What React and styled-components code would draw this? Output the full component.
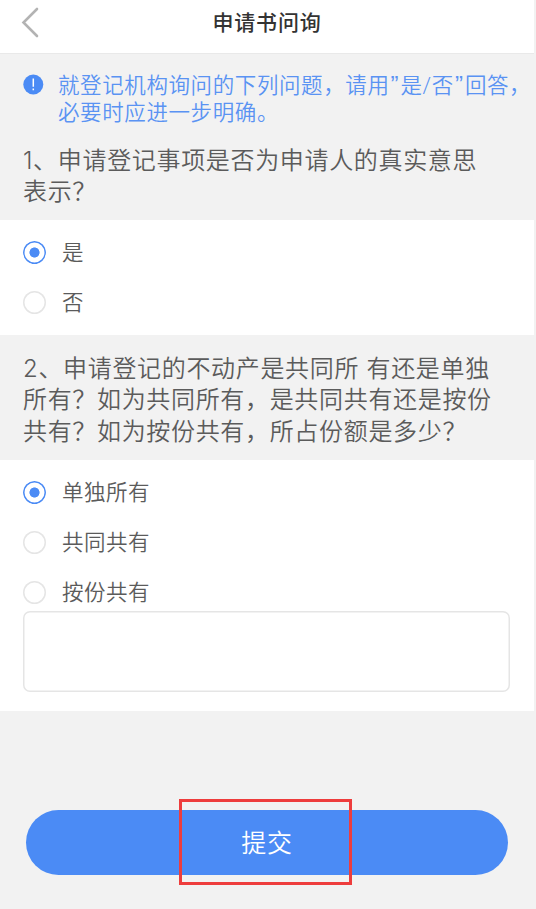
import { useState } from "react";
import styled, { createGlobalStyle } from "styled-components";

const colors = {
  blue: "#4b8bf5",
  notice: "#5a93f3",
  text: "#5b5b5b",
  title: "#333333",
  page: "#f2f2f2",
  border: "#e5e5e5",
  red: "#ee3d3d",
  white: "#ffffff",
};

const GlobalStyle = createGlobalStyle`
  * {
    box-sizing: border-box;
  }
  body {
    margin: 0;
    background-color: ${colors.page};
    font-family: Inter, "Noto Sans CJK SC", sans-serif;
    font-weight: 350;
  }
`;

const PageContainer = styled.main`
  width: 534px;
  height: 909px;
  overflow: hidden;
  color: ${colors.text};
`;

const Header = styled.header`
  display: grid;
  grid-template-columns: 60px 1fr 60px;
  align-items: center;
  height: 53px;
  padding-bottom: 7px;
  background-color: ${colors.white};
  box-shadow: 0 1px 0 #e9e9e9;
`;

const BackButton = styled.button`
  display: flex;
  padding: 0 0 0 21px;
  border: 0;
  background: none;
  cursor: pointer;
`;

const Title = styled.h1`
  margin: 0;
  font-size: 21px;
  font-weight: 500;
  line-height: 30px;
  letter-spacing: 0.8px;
  text-align: center;
  color: ${colors.title};
`;

const Notice = styled.div`
  display: flex;
  gap: 14px;
  padding: 19px 0 0 23px;
  color: ${colors.notice};
`;

const NoticeIcon = styled.svg`
  flex: none;
  margin-top: 2px;
`;

const NoticeText = styled.p`
  margin: 0;
  font-family: Roboto, "Noto Sans CJK SC", sans-serif;
  font-size: 21.5px;
  line-height: 27px;
  letter-spacing: 0.6px;
  white-space: pre;
`;

const Quote = styled.span`
  padding-left: 1px;
  font-family: "Liberation Sans", sans-serif;
  font-size: 24px;
  line-height: 1;
  letter-spacing: 2px;
`;

const Question = styled.h2`
  margin: 0;
  padding: ${(props) => props.$padding};
  font-size: 24px;
  font-weight: inherit;
  line-height: 31.4px;
  letter-spacing: 0.67px;
  white-space: pre;
`;

const Answers = styled.div`
  height: ${(props) => props.$height}px;
  padding: 7px 24px 0 23px;
  background-color: ${colors.white};
`;

const Option = styled.label`
  display: flex;
  align-items: center;
  gap: 16px;
  height: 50px;
  font-size: 21.5px;
  line-height: 30px;
  letter-spacing: 0.5px;
  cursor: pointer;
`;

const Radio = styled.input`
  appearance: none;
  flex: none;
  width: 23px;
  height: 23px;
  margin: 0;
  border-radius: 50%;
  background-color: ${colors.white};
  box-shadow: inset 0 0 0 1.5px ${colors.border};
  &:checked {
    background-image: radial-gradient(
      circle,
      ${colors.blue} 4.7px,
      transparent 5.4px
    );
    box-shadow: inset 0 0 0 1.5px ${colors.blue};
  }
`;

const ShareInput = styled.textarea`
  display: block;
  width: 487px;
  height: 81px;
  margin-top: -6px;
  padding: 12px;
  border: 0;
  border-radius: 7px;
  box-shadow: inset 0 0 0 1.5px ${colors.border};
  font: inherit;
  resize: none;
  outline: none;
`;

const Footer = styled.footer`
  position: relative;
  padding: 99px 26px 0;
`;

const SubmitButton = styled.button`
  display: block;
  width: 482px;
  height: 65px;
  padding: 0 0 4px;
  border: 0;
  border-radius: 33px;
  background-color: ${colors.blue};
  color: ${colors.white};
  font-family: inherit;
  font-size: 25px;
  font-weight: inherit;
  letter-spacing: 0.8px;
  cursor: pointer;
`;

const Highlight = styled.div`
  position: absolute;
  top: 88px;
  left: 179px;
  width: 173px;
  height: 86px;
  border: 3px solid ${colors.red};
  pointer-events: none;
`;

const questions = [
  {
    id: "intent",
    text: "1、申请登记事项是否为申请人的真实意思\n表示？",
    options: ["是", "否"],
    padding: "19px 0 12.2px 23px",
    height: 115,
  },
  {
    id: "ownership",
    text: "2、申请登记的不动产是共同所 有还是单独\n所有？如为共同所有，是共同共有还是按份\n共有？如为按份共有，所占份额是多少？",
    options: ["单独所有", "共同共有", "按份共有"],
    padding: "18px 0 12.8px 23px",
    height: 251,
    hasInput: true,
  },
];

export default function App() {
  const [answers, setAnswers] = useState({ intent: 0, ownership: 0 });

  return (
    <PageContainer>
      <GlobalStyle />
      <Header>
        <BackButton>
          <svg width="20" height="32" viewBox="0 0 20 32" fill="none">
            <path
              d="M16 2 2.5 15.5 16 29"
              stroke="#b3b3b3"
              strokeWidth="2.6"
              strokeLinecap="round"
            />
          </svg>
        </BackButton>
        <Title>申请书问询</Title>
      </Header>
      <Notice>
        <NoticeIcon width="21" height="21" viewBox="0 0 21 21">
          <circle cx="10.3" cy="10.5" r="10" fill={colors.blue} />
          <path
            d="M10.3 4.5v8.2M10.3 14.4v1.8"
            stroke={colors.white}
            strokeWidth="1.5"
          />
        </NoticeIcon>
        <NoticeText>
          就登记机构询问的下列问题，请用<Quote>”</Quote>是/否
          <Quote>”</Quote>回答，{"\n"}
          必要时应进一步明确。
        </NoticeText>
      </Notice>
      {questions.map((question) => (
        <section key={question.id}>
          <Question $padding={question.padding}>{question.text}</Question>
          <Answers $height={question.height}>
            {question.options.map((option, index) => (
              <Option key={option}>
                <Radio
                  type="radio"
                  name={question.id}
                  checked={answers[question.id] === index}
                  onChange={() =>
                    setAnswers({ ...answers, [question.id]: index })
                  }
                />
                {option}
              </Option>
            ))}
            {question.hasInput && <ShareInput />}
          </Answers>
        </section>
      ))}
      <Footer>
        <SubmitButton>提交</SubmitButton>
        <Highlight />
      </Footer>
    </PageContainer>
  );
}
